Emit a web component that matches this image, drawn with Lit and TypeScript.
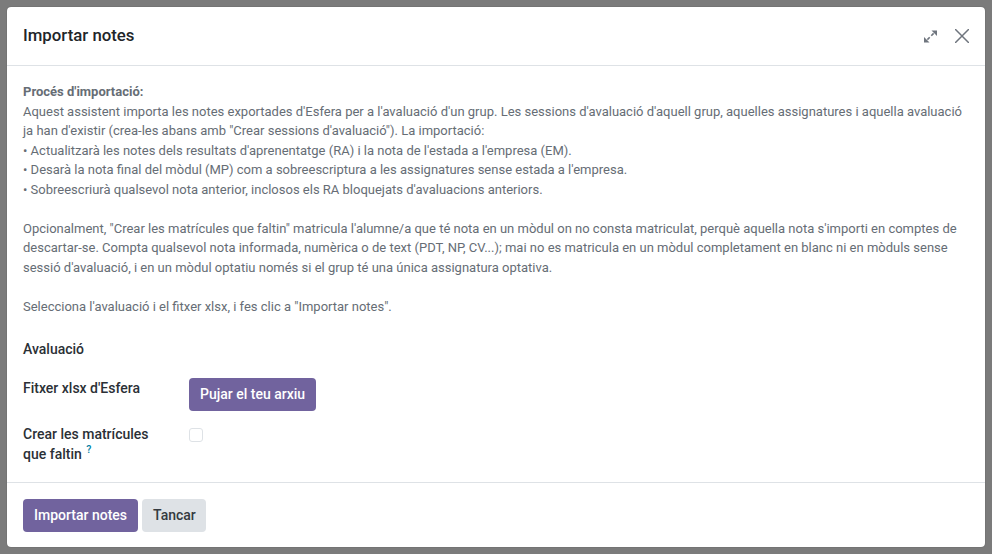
import { LitElement, html, css } from "lit";
import { customElement } from "lit/decorators.js";

@customElement("app-root")
export class AppRoot extends LitElement {
  static styles = css`
    :host {
      display: block;
      width: 992px;
      height: 554px;
      box-sizing: border-box;
      padding: 7px;
      background: #7b7b7b;
      font-family: Roboto, sans-serif;
      font-size: 13px;
      line-height: 19.5px;
      color: #212529;
    }
    .modal {
      height: 540px;
      box-sizing: border-box;
      background: #fff;
      border-radius: 4px;
      display: flex;
      flex-direction: column;
      overflow: hidden;
      box-shadow: 0 0 1px rgba(0, 0, 0, 0.5);
    }
    .header {
      height: 59px;
      box-sizing: border-box;
      flex: none;
      display: flex;
      align-items: center;
      padding: 0 16px 0 16px;
      border-bottom: 1px solid #dee2e6;
    }
    .title {
      flex: 1;
      font-size: 16.8px;
      font-weight: 500;
      color: #212529;
    }
    .icons {
      display: flex;
      align-items: center;
      gap: 18px;
    }
    .icons svg {
      display: block;
    }
    .body {
      flex: 1;
      padding: 16px 16px 0;
    }
    .intro {
      color: #666d75;
      margin: 0;
    }
    .intro b {
      font-weight: 700;
    }
    .form {
      margin-top: 22.5px;
      display: grid;
      grid-template-columns: 166px 1fr;
      align-items: start;
      font-size: 14px;
      line-height: 21px;
    }
    .label {
      font-weight: 500;
      color: #2b3036;
    }
    .row1 {
      margin-bottom: 18px;
    }
    .two-lines {
      line-height: 20.5px;
    }
    .upload {
      justify-self: start;
      margin-bottom: 13px;
    }
    .btn {
      display: block;
      box-sizing: border-box;
      height: 33px;
      padding: 0 11px;
      border: 0;
      border-radius: 4px;
      font: 500 14px/33px Roboto, sans-serif;
      background: #71639e;
      color: #fff;
    }
    .btn.secondary {
      background: #dee2e6;
      color: #343a40;
      padding: 0 10.5px 0 11px;
    }
    .check {
      margin-top: 4px;
      width: 14px;
      height: 14px;
      box-sizing: border-box;
      border: 1px solid #dee2e6;
      border-radius: 3px;
      background: #fff;
    }
    sup {
      font-size: 10.5px;
      line-height: 0;
      color: #0180a5;
      font-weight: 500;
      margin-left: 1px;
      vertical-align: 6px;
    }
    .footer {
      flex: none;
      height: 65px;
      box-sizing: border-box;
      padding: 16px 16px;
      display: flex;
      gap: 4px;
      border-top: 1px solid #dee2e6;
    }
  `;

  render() {
    return html`
      <div class="modal">
        <div class="header">
          <div class="title">Importar notes</div>
          <div class="icons">
            <svg width="13" height="13" viewBox="0 0 13 13" fill="#6f757e" stroke="none">
              <path d="M7.5.5H13V6z" />
              <path d="M0 7v5.5h5.5z" />
              <path d="M9.6 3.4 7.3 5.7M3.4 9.6 5.7 7.3" stroke="#6f757e" stroke-width="1.6" fill="none" />
            </svg>
            <svg width="14" height="14" viewBox="0 0 14 14" stroke="#6f757e" stroke-width="1.5" fill="none">
              <path d="M0 0l14 14M14 0L0 14" />
            </svg>
          </div>
        </div>
        <div class="body">
          <p class="intro">
            <b>Procés d'importació:</b><br />
            Aquest assistent importa les notes exportades d'Esfera per a l'avaluació d'un grup. Les sessions d'avaluació d'aquell grup, aquelles assignatures i aquella avaluació<br />
            ja han d'existir (crea-les abans amb "Crear sessions d'avaluació"). La importació:<br />
            • Actualitzarà les notes dels resultats d'aprenentatge (RA) i la nota de l'estada a l'empresa (EM).<br />
            • Desarà la nota final del mòdul (MP) com a sobreescriptura a les assignatures sense estada a l'empresa.<br />
            • Sobreescriurà qualsevol nota anterior, inclosos els RA bloquejats d'avaluacions anteriors.<br />
            <br />
            Opcionalment, "Crear les matrícules que faltin" matricula l'alumne/a que té nota en un mòdul on no consta matriculat, perquè aquella nota s'importi en comptes de<br />
            descartar-se. Compta qualsevol nota informada, numèrica o de text (PDT, NP, CV...); mai no es matricula en un mòdul completament en blanc ni en mòduls sense<br />
            sessió d'avaluació, i en un mòdul optatiu només si el grup té una única assignatura optativa.<br />
            <br />
            Selecciona l'avaluació i el fitxer xlsx, i fes clic a "Importar notes".
          </p>
          <div class="form">
            <div class="label row1">Avaluació</div>
            <div></div>
            <div class="label">Fitxer xlsx d'Esfera</div>
            <div class="upload"><span class="btn">Pujar el teu arxiu</span></div>
            <div class="label two-lines">Crear les matrícules<br />que faltin <sup>?</sup></div>
            <div class="check"></div>
          </div>
        </div>
        <div class="footer">
          <span class="btn">Importar notes</span>
          <span class="btn secondary">Tancar</span>
        </div>
      </div>
    `;
  }
}
